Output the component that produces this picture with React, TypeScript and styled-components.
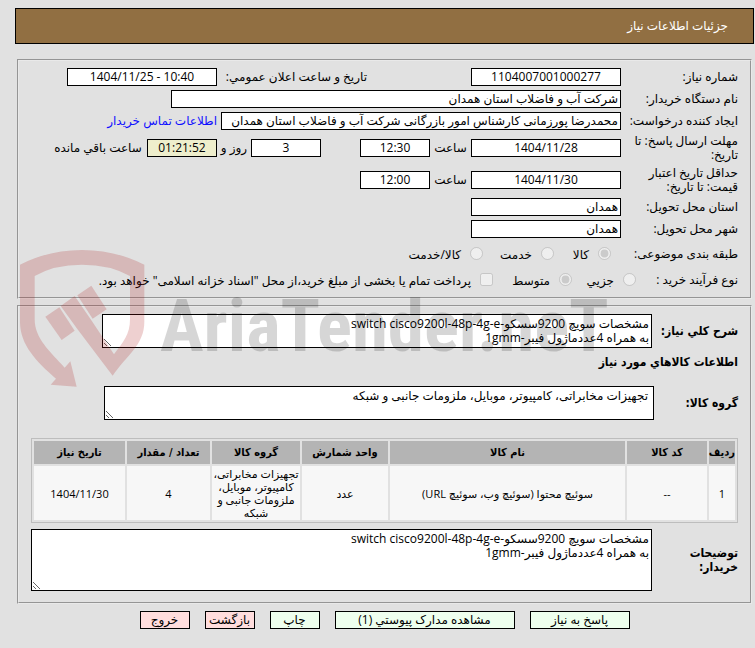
import React from "react";
import styled, { createGlobalStyle } from "styled-components";

const GlobalStyle = createGlobalStyle`
  body {
    margin: 0;
    background: #e1e1e1;
  }
  body, input, textarea, button, table {
    font-family: "Open Sans", "DejaVu Sans", sans-serif;
    font-size: 12px;
    line-height: 14px;
    color: #000;
  }
`;

const boldFont = `"DejaVu Sans Condensed", "DejaVu Sans", sans-serif`;

const Page = styled.main`
  position: relative;
  padding: 8px 1px 16px 15px;
`;

const TitleBar = styled.header`
  box-sizing: border-box;
  height: 36px;
  padding: 0 25px;
  display: flex;
  align-items: center;
  border: 1px solid #000;
  background: #916f42;
`;

const Title = styled.h1`
  margin: 0;
  font-size: 12px;
  font-weight: normal;
  color: #fff;
`;

const Body = styled.form`
  margin: 15px 2px 0 2px;
  display: flex;
  flex-direction: column;
  gap: 6px;
`;

const Panel = styled.fieldset<{ $pad: string }>`
  margin: 0;
  min-width: 0;
  padding: ${(p) => p.$pad};
  border: 2px groove #e9e9e9;
`;

const Row = styled.div<{ $h?: number }>`
  display: flex;
  align-items: center;
  min-height: ${(p) => p.$h ?? 22}px;
`;

const Label = styled.label<{ $w?: number }>`
  flex: none;
  box-sizing: border-box;
  width: ${(p) => p.$w ?? 117}px;
  white-space: nowrap;
`;

const BoldLabel = styled(Label)`
  font-family: ${boldFont};
  font-weight: bold;
`;

const Field = styled.input<{ $w: number; $center?: boolean; $tone?: string }>`
  box-sizing: border-box;
  flex: none;
  width: ${(p) => p.$w}px;
  height: 18px;
  padding: 0 2px 2px;
  border: 1px solid #000;
  border-radius: 0;
  outline: none;
  background: ${(p) => p.$tone ?? "#fff"};
  text-align: ${(p) => (p.$center ? "center" : "start")};
`;

const Unit = styled.label<{ $w: number }>`
  flex: none;
  width: ${(p) => p.$w}px;
  text-align: center;
  white-space: nowrap;
`;

const Spacer = styled.span<{ $w: number }>`
  flex: none;
  width: ${(p) => p.$w}px;
`;

const ContactLink = styled.a`
  margin-inline-start: 4px;
  color: #1010ff;
  text-decoration: none;
  white-space: nowrap;
`;

const Option = styled.label<{ $w?: number }>`
  flex: none;
  display: flex;
  align-items: center;
  gap: 9px;
  width: ${(p) => (p.$w ? p.$w + "px" : "auto")};
  white-space: nowrap;
  input {
    margin: 0 0 2px;
  }
  span {
    padding-top: 2px;
  }
`;

const Area = styled.textarea<{ $inset?: number }>`
  box-sizing: border-box;
  display: block;
  min-width: 0;
  width: 550px;
  padding: 2px ${(p) => p.$inset ?? 2}px;
  border: 1px solid #000;
  border-radius: 0;
  outline: none;
  resize: both;
  overflow: hidden;
`;

const WideArea = styled(Area)`
  flex: 1;
`;

const SectionTitle = styled.h2`
  margin: 7px 0 17px;
  font-family: ${boldFont};
  font-size: 12px;
  line-height: 14px;
`;

const Items = styled.table`
  width: 100%;
  margin: 18px 0 6px;
  table-layout: fixed;
  border: 1px solid #bdbdbd;
  border-collapse: separate;
  border-spacing: 2px;
  text-align: center;
  font-size: 11px;
  line-height: 13px;
  th {
    height: 23px;
    padding: 0;
    background: #b4b4b4;
    white-space: nowrap;
    font-family: ${boldFont};
    font-size: 11px;
  }
  td {
    padding: 1px 0;
    background: #f7f7f7;
  }
`;

const Col = styled.col<{ $w?: number }>`
  width: ${(p) => (p.$w ? p.$w + "px" : "auto")};
`;

const Actions = styled.footer`
  display: flex;
  justify-content: center;
  gap: 15px;
  margin-top: 1px;
`;

const Action = styled.button<{ $w: number; $leave?: boolean }>`
  box-sizing: border-box;
  width: ${(p) => p.$w}px;
  height: 18px;
  padding: 0;
  border: 1px solid #000;
  border-radius: 0;
  background: ${(p) => (p.$leave ? "#ffdddd" : "#eeffee")};
  white-space: nowrap;
`;

const Watermark = styled.div`
  position: absolute;
  top: 248px;
  left: 20px;
  direction: ltr;
  pointer-events: none;
  svg {
    display: block;
  }
`;

const Brand = () => (
  <Watermark aria-hidden="true">
    <svg width="600" height="140" viewBox="0 0 600 140">
      <g fill="#aa1414" fillOpacity="0.2" transform="scale(0.3333) translate(-60 -54)">
        <path d="M60 104Q146 60 246 60T433 104V275C433 345 380 375 338 437L232 297L182 228L224 198L272 268L342 373C370 335 390 315 390 268V138Q330 104 246 104T104 138V268C104 325 150 365 194 413L211 394L230 470L152 464L168 446C110 395 60 345 60 275Z" />
        <path d="M136 260L178 232L224 302L185 330Z" />
        <path d="M232 196L274 167L320 238L278 266Z" />
      </g>
      <text
        x="140"
        y="103"
        fill="#000"
        fillOpacity="0.16"
        fontFamily="'Liberation Sans Narrow', 'Roboto Condensed', Roboto, sans-serif"
        fontWeight="bold"
        fontSize="73"
      >
        AriaTender.neT
      </text>
    </svg>
  </Watermark>
);

const DESCRIPTION = "مشخصات سويچ 9200سسکو-switch cisco9200l-48p-4g-e\nبه همراه 4عددماژول فيبر-1gmm";

export default function App() {
  return (
    <Page dir="rtl" lang="fa">
      <GlobalStyle />
      <TitleBar>
        <Title>جزئیات اطلاعات نیاز</Title>
      </TitleBar>
      <Body onSubmit={(e) => e.preventDefault()}>
        <Panel $pad="5px 12px 5px">
          <Row>
            <Label htmlFor="number">شماره نیاز:</Label>
            <Field id="number" $w={150} $center dir="ltr" readOnly value="1104007001000277" />
            <Spacer $w={104} />
            <Label $w={150} htmlFor="announced">تاریخ و ساعت اعلان عمومي:</Label>
            <Field id="announced" $w={150} $center dir="ltr" readOnly value="1404/11/25 - 10:40" />
          </Row>
          <Row>
            <Label htmlFor="buyer">نام دستگاه خریدار:</Label>
            <Field id="buyer" $w={450} readOnly value="شرکت آب و فاضلاب استان همدان" />
          </Row>
          <Row>
            <Label htmlFor="creator">ایجاد کننده درخواست:</Label>
            <Field id="creator" $w={400} readOnly value="محمدرضا پورزمانی کارشناس امور بازرگانی شرکت آب و فاضلاب استان همدان" />
            <ContactLink href="#contact">اطلاعات تماس خریدار</ContactLink>
          </Row>
          <Row $h={32}>
            <Label htmlFor="deadline">مهلت ارسال پاسخ: تا<br />تاریخ:</Label>
            <Field id="deadline" $w={150} $center dir="ltr" readOnly value="1404/11/28" />
            <Unit $w={41} htmlFor="deadline-time">ساعت</Unit>
            <Field id="deadline-time" $w={70} $center dir="ltr" readOnly value="12:30" />
            <Spacer $w={39} />
            <Field id="days" $w={70} $center dir="ltr" readOnly value="3" />
            <Unit $w={34} htmlFor="days">روز و</Unit>
            <Field id="left" $w={70} $center $tone="#eeeecc" dir="ltr" readOnly value="01:21:52" />
            <Unit $w={98} htmlFor="left">ساعت باقي مانده</Unit>
          </Row>
          <Row $h={32}>
            <Label htmlFor="valid">حداقل تاریخ اعتبار<br />قیمت: تا تاریخ:</Label>
            <Field id="valid" $w={150} $center dir="ltr" readOnly value="1404/11/30" />
            <Unit $w={41} htmlFor="valid-time">ساعت</Unit>
            <Field id="valid-time" $w={70} $center dir="ltr" readOnly value="12:00" />
          </Row>
          <Row>
            <Label htmlFor="province">استان محل تحویل:</Label>
            <Field id="province" $w={150} readOnly value="همدان" />
          </Row>
          <Row>
            <Label htmlFor="city">شهر محل تحویل:</Label>
            <Field id="city" $w={150} readOnly value="همدان" />
          </Row>
          <Row $h={28}>
            <Label as="span" $w={127}>طبقه بندی موضوعی:</Label>
            <Option $w={57}><input type="radio" name="kind" disabled defaultChecked /><span>کالا</span></Option>
            <Option $w={71}><input type="radio" name="kind" disabled /><span>خدمت</span></Option>
            <Option><input type="radio" name="kind" disabled /><span>کالا/خدمت</span></Option>
          </Row>
          <Row $h={24}>
            <Label as="span" $w={102}>نوع فرآیند خرید :</Label>
            <Option $w={64}><input type="radio" name="process" disabled /><span>جزیي</span></Option>
            <Option $w={79}><input type="radio" name="process" disabled defaultChecked /><span>متوسط</span></Option>
            <Option><input type="checkbox" disabled /><span>پرداخت تمام یا بخشی از مبلغ خرید،از محل "اسناد خزانه اسلامی" خواهد بود.</span></Option>
          </Row>
        </Panel>
        <Panel $pad="7px 12px 11px">
          <Row>
            <BoldLabel $w={86} htmlFor="summary">شرح کلي نیاز:</BoldLabel>
            <Area id="summary" rows={2} readOnly value={DESCRIPTION} />
          </Row>
          <SectionTitle>اطلاعات کالاهاي مورد نیاز</SectionTitle>
          <Row>
            <BoldLabel $w={84} htmlFor="group">گروه کالا:</BoldLabel>
            <Area id="group" $inset={5} rows={2} readOnly value="تجهیزات مخابراتی، کامپیوتر، موبایل، ملزومات جانبی و شبکه" />
          </Row>
          <Items>
            <colgroup>
              <Col $w={26} />
              <Col $w={80} />
              <Col />
              <Col $w={86} />
              <Col $w={88} />
              <Col $w={83} />
              <Col $w={91} />
            </colgroup>
            <thead>
              <tr>
                <th scope="col">ردیف</th>
                <th scope="col">کد کالا</th>
                <th scope="col">نام کالا</th>
                <th scope="col">واحد شمارش</th>
                <th scope="col">گروه کالا</th>
                <th scope="col">تعداد / مقدار</th>
                <th scope="col">تاریخ نیاز</th>
              </tr>
            </thead>
            <tbody>
              <tr>
                <td>1</td>
                <td>--</td>
                <td>سوئیچ محتوا (سوئیچ وب، سوئیچ URL)</td>
                <td>عدد</td>
                <td>تجهیزات مخابراتی، کامپیوتر، موبایل، ملزومات جانبی و شبکه</td>
                <td>4</td>
                <td>1404/11/30</td>
              </tr>
            </tbody>
          </Items>
          <Row>
            <BoldLabel $w={86} htmlFor="notes">توضیحات<br />خریدار:</BoldLabel>
            <WideArea id="notes" rows={4} readOnly value={DESCRIPTION} />
          </Row>
        </Panel>
        <Actions>
          <Action type="submit" $w={100}>پاسخ به نیاز</Action>
          <Action type="button" $w={180}>مشاهده مدارک پیوستي (1)</Action>
          <Action type="button" $w={50}>چاپ</Action>
          <Action type="button" $w={50} $leave>بازگشت</Action>
          <Action type="button" $w={50} $leave>خروج</Action>
        </Actions>
      </Body>
      <Brand />
    </Page>
  );
}
